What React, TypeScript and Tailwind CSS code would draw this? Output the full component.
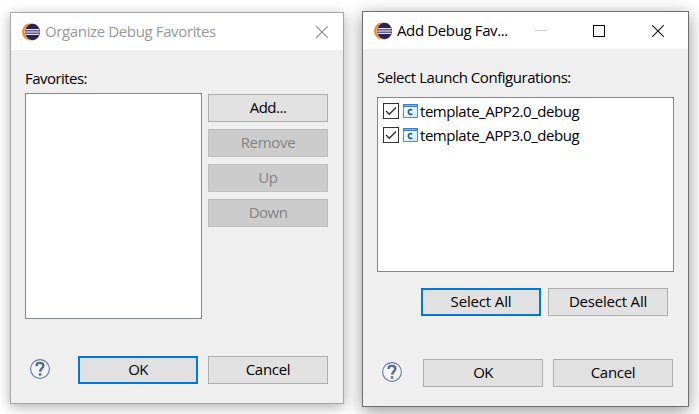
import React from "react";

function EclipseLogo() {
  return (
    <svg width="18" height="18" viewBox="0 0 18 18" className="block shrink-0">
      <ellipse cx="8" cy="9" rx="7.900" ry="8.500" fill="#f08a1c" />
      <ellipse cx="10.2" cy="9" rx="8" ry="8.500" fill="#f3c99a" />
      <ellipse cx="10.500" cy="9" rx="7.500" ry="8.2" fill="#2c2255" />
      <path d="M3.400 6h13.900v6H3.400z" fill="#645b95" />
      <path d="M3.500 6.500h13.800M3 9h14.900M3.500 11.500h13.800" stroke="#e6e3f1" strokeWidth="1" />
    </svg>
  );
}

function HelpIcon() {
  return (
    <svg width="20" height="20" viewBox="0 0 20 20" className="block shrink-0">
      <circle cx="10" cy="10" r="9.400" fill="#f3f4f5" stroke="#6478a0" strokeWidth="1.1" />
      <path d="M6.600 7V6.200C6.800 3 13.300 3.100 13.400 6.700c0 2.700-3.200 2.600-3.300 5.900" fill="none" stroke="#566b8f" strokeWidth="2.400" />
      <rect x="8.700" y="14.200" width="2.700" height="2.500" rx=".6" fill="#566b8f" />
    </svg>
  );
}

function CloseIcon({ color }: { color: string }) {
  return (
    <svg width="12" height="12" viewBox="0 0 12 12" className="block shrink-0">
      <path d="M.3.3l11.4 11.4M11.7.3L.3 11.7" stroke={color} strokeWidth="1.1" />
    </svg>
  );
}

function ConfigIcon() {
  return (
    <svg width="15" height="14" viewBox="0 0 15 14" className="block shrink-0">
      <defs>
        <linearGradient id="pane" x1="0" y1="0" x2="1" y2="1">
          <stop offset="0" stopColor="#ffffff" />
          <stop offset="1" stopColor="#cdeafa" />
        </linearGradient>
        <linearGradient id="edge" x1="0" y1="0" x2="1" y2="1">
          <stop offset="0.3" stopColor="#4f93c7" />
          <stop offset="1" stopColor="#96844c" />
        </linearGradient>
      </defs>
      <rect x=".5" y=".5" width="14" height="13" fill="url(#pane)" stroke="url(#edge)" />
      <rect width="15" height="3" fill="#3f7fbd" />
      <rect x="1" y="1" width="13" height="1" fill="#76aedc" />
      <path d="M9.2 6.1C7.3 5 5.4 5.800 5.400 8s1.900 3 3.800 1.900" fill="none" stroke="#245f91" strokeWidth="1.700" />
    </svg>
  );
}

type Kind = "normal" | "default" | "disabled";
const kinds: Record<Kind, string> = {
  normal: "border border-[#adadad] bg-[#e1e1e1] text-black",
  default: "border-2 border-[#0078d7] bg-[#e1e1e1] text-black",
  disabled: "border border-[#bfbfbf] bg-[#cccccc] text-[#838383]",
};

function Button({ label, kind = "normal", spacing = "tracking-[-0.3px]" }: { label: string; kind?: Kind; spacing?: string }) {
  return (
    <button className={`flex h-7 w-[120px] shrink-0 items-center justify-center whitespace-nowrap pb-0.5 leading-5 ${kinds[kind]} ${spacing}`}>
      <span>{label}</span>
    </button>
  );
}

function LaunchRow({ name }: { name: string }) {
  return (
    <div className="flex h-6 items-start">
      <span className="flex size-4 items-center justify-center border border-[#333] bg-white">
        <svg width="14" height="14" viewBox="0 0 14 14" className="block shrink-0">
          <path d="M2 7l3.300 3.300L12 3.600" fill="none" stroke="#333" strokeWidth="1.4" />
        </svg>
      </span>
      <span className="ml-1 mt-px"><ConfigIcon /></span>
      <span className="-mt-0.5 ml-0.5 whitespace-nowrap leading-5 tracking-[-0.45px]">{name}</span>
    </div>
  );
}

export default function App() {
  return (
    <main className="flex h-[414px] w-[699px] items-start overflow-hidden bg-white pl-2.5 pt-[11px] font-['Open_Sans','Noto_Sans',sans-serif] text-[15px] text-black">
      <section className="mt-px flex h-[392px] w-[334px] shrink-0 flex-col border border-[#a6a8a7] bg-[#efefef] shadow-[0_3px_12px_rgba(0,0,0,0.32)]">
        <header className="flex h-[37px] shrink-0 items-center bg-white pl-[11px] pr-[15px] text-[#999]">
          <EclipseLogo />
          <h1 className="ml-[5px] flex-1 whitespace-nowrap pb-0.5 leading-5 tracking-[-0.37px]">Organize Debug Favorites</h1>
          <CloseIcon color="#888" />
        </header>
        <div className="px-3.5 pt-[18px]">
          <p className="h-[25px] leading-5 tracking-[-0.55px]">Favorites:</p>
          <div className="flex">
            <div className="h-[226px] w-[177px] border border-[#828790] bg-white" />
            <div className="ml-1.5 mt-px flex flex-col gap-[7px]">
              <Button label="Add..." spacing="tracking-[-0.5px]" />
              <Button label="Remove" kind="disabled" />
              <Button label="Up" kind="disabled" />
              <Button label="Down" kind="disabled" spacing="tracking-[-0.5px]" />
            </div>
          </div>
        </div>
        <footer className="mt-[37px] flex pl-[19px]">
          <span className="mr-7 mt-[3px]"><HelpIcon /></span>
          <div className="flex gap-2.5">
            <Button label="OK" kind="default" spacing="tracking-[-0.6px]" />
            <Button label="Cancel" />
          </div>
        </footer>
      </section>

      <section className="ml-[18px] flex h-[396px] w-[327px] shrink-0 flex-col border border-[#6c6e70] bg-[#efefef] shadow-[0_4px_16px_rgba(0,0,0,0.42)]">
        <header className="flex h-[37px] shrink-0 items-center bg-white pl-[11px] pr-6">
          <EclipseLogo />
          <h1 className="ml-[5px] flex-1 whitespace-nowrap pb-0.5 leading-5 tracking-[-0.37px]">Add Debug Fav...</h1>
          <span className="mr-[46px] h-px w-3 bg-[#ccc]" />
          <span className="mr-[47px] size-3 border border-black" />
          <CloseIcon color="#111" />
        </header>
        <div className="px-3.5 pt-[18px]">
          <p className="h-[30px] leading-5 tracking-[-0.45px]">Select Launch Configurations:</p>
          <div className="h-[175px] w-[297px] border border-[#828790] bg-white pl-[5px] pt-[5px]">
            <LaunchRow name="template_APP2.0_debug" />
            <LaunchRow name="template_APP3.0_debug" />
          </div>
          <div className="mt-4 flex gap-[7px] pl-11">
            <Button label="Select All" kind="default" spacing="tracking-[-0.15px]" />
            <Button label="Deselect All" spacing="tracking-[-0.2px]" />
          </div>
        </div>
        <footer className="mt-[43px] flex pl-[19px]">
          <span className="mr-[21px] mt-[3px]"><HelpIcon /></span>
          <div className="flex gap-2.5">
            <Button label="OK" spacing="tracking-[-0.6px]" />
            <Button label="Cancel" />
          </div>
        </footer>
      </section>
    </main>
  );
}
